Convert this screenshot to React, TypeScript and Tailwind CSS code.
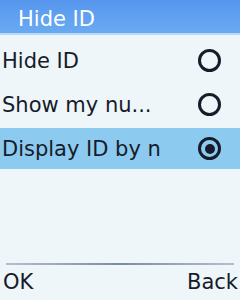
import React from "react";

const font = { fontFamily: '"DejaVu Sans", sans-serif' };

function Radio({ selected }: { selected?: boolean }) {
  return (
    <div className="w-[23px] h-[23px] rounded-full border-[3px] border-[#161c2a] flex items-center justify-center">
      {selected && <div className="w-[10px] h-[10px] rounded-full bg-[#161c2a]" />}
    </div>
  );
}

function Row({ label, selected }: { label: string; selected?: boolean }) {
  return (
    <div
      className={`h-[41px] flex items-center justify-between pl-[2px] pr-[19px] ${
        selected ? "bg-[#8ccbef]" : ""
      }`}
    >
      <span className="text-[21px] leading-[24px] text-[#161c2a] whitespace-nowrap">{label}</span>
      <Radio selected={selected} />
    </div>
  );
}

export default function App() {
  return (
    <div className="w-[240px] h-[300px] bg-[#eff6f9] flex flex-col overflow-hidden" style={font}>
      <div className="h-[33px] bg-gradient-to-b from-[#5697ee] to-[#6aaaf2] pl-[18px] pt-[7px]">
        <span className="text-[21px] leading-[24px] text-white whitespace-nowrap">Hide ID</span>
      </div>
      <div className="h-[2px] bg-[#b9daf6]" />
      <div className="flex flex-col gap-[3px] mt-[5px]">
        <Row label="Hide ID" />
        <Row label="Show my nu..." />
        <Row label="Display ID by n" selected />
      </div>
      <div className="flex-1" />
      <div className="mx-[6px] h-[2px] bg-gradient-to-r from-[#b4c0cf] via-[#7d8aa3] to-[#b4c0cf]" />
      <div className="flex justify-between pl-[3px] pr-[2px] pt-[5px] h-[35px]">
        <span className="text-[21px] leading-[24px] text-[#161c2a]">OK</span>
        <span className="text-[21px] leading-[24px] text-[#161c2a]">Back</span>
      </div>
    </div>
  );
}
